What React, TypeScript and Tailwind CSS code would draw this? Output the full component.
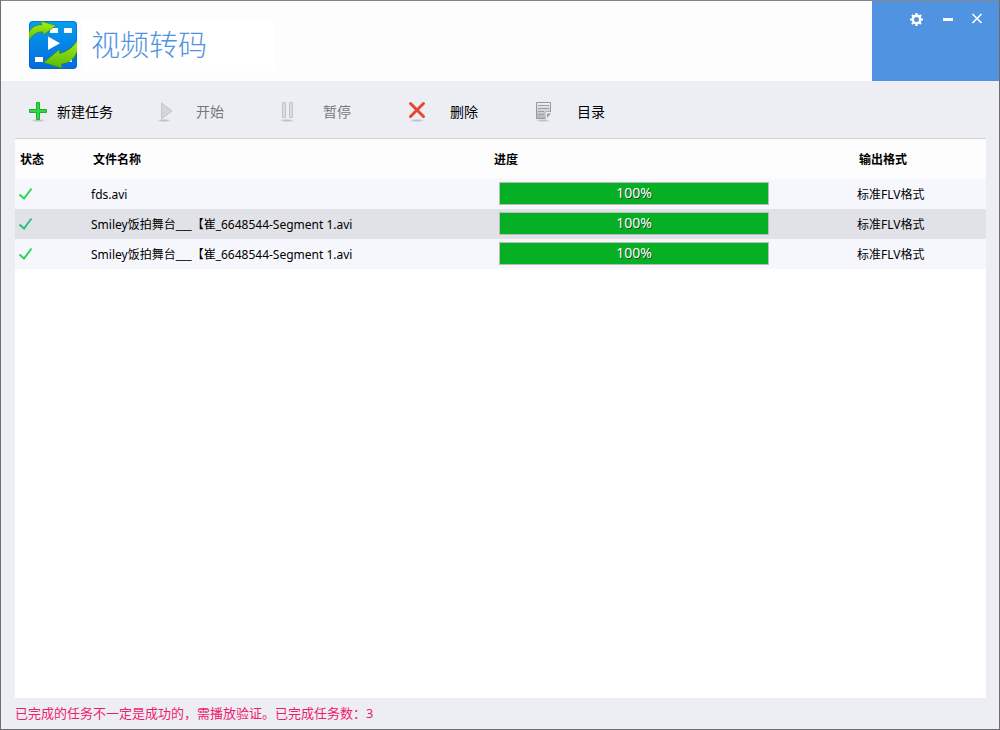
import React, { useState } from "react";

const initialTasks = [
  { id: 1, name: "fds.avi", progress: 100, format: "标准FLV格式" },
  { id: 2, name: "Smiley饭拍舞台___【崔_6648544-Segment 1.avi", progress: 100, format: "标准FLV格式" },
  { id: 3, name: "Smiley饭拍舞台___【崔_6648544-Segment 1.avi", progress: 100, format: "标准FLV格式" },
];

function Logo() {
  return (
    <svg width="48" height="48" viewBox="0 0 48 48" aria-hidden="true">
      <defs>
        <linearGradient id="logoBg" x1="0" y1="0" x2="0" y2="1">
          <stop offset="0" stopColor="#049ff0" />
          <stop offset="1" stopColor="#056adb" />
        </linearGradient>
        <linearGradient id="logoArrow" x1="0" y1="0" x2="0" y2="1">
          <stop offset="0" stopColor="#aaf014" />
          <stop offset="1" stopColor="#55b808" />
        </linearGradient>
        <clipPath id="logoClip">
          <rect width="48" height="48" rx="4" />
        </clipPath>
      </defs>
      <g clipPath="url(#logoClip)">
        <rect width="48" height="48" fill="url(#logoBg)" />
        <rect x="0.5" y="0.5" width="47" height="47" rx="4" fill="none" stroke="#0560bb" strokeOpacity="0.6" />
        <path d="M21 7h8v5h-8zM35 7h8v5h-8zM6 36h8v5H6zM35 36h8v5h-8z" fill="#fff" />
        <path d="M19 15.5v13.5l12-6.7z" fill="#fff" />
        <path
          d="M-1 21V14C1 7 6 3.500 13 4L12 0.300L27 4.500L14.500 14L13.800 10.800C8 10.500 3 14 -1 21Z"
          fill="url(#logoArrow)"
          stroke="#3a8a10"
          strokeWidth="0.6"
        />
        <path
          d="M49 18C45 25.500 39 30.500 30.500 32.500L30.500 28.500L14.500 41.500L33 47.200L32.500 43C41 42.500 47.500 36 49 27Z"
          fill="url(#logoArrow)"
          stroke="#3a8a10"
          strokeWidth="0.6"
        />
      </g>
    </svg>
  );
}

function Shadow({ cx }: { cx: number }) {
  return (
    <g fill="#b4b5bb">
      <ellipse cx={cx} cy="20.500" rx="7" ry="1.500" opacity="0.3" />
      <ellipse cx={cx} cy="20.500" rx="4.500" ry="0.800" opacity="0.7" />
    </g>
  );
}

function AddIcon() {
  return (
    <svg width="24" height="24" viewBox="0 0 24 24" aria-hidden="true">
      <Shadow cx={12} />
      <path d="M10.500 2.500h3v7h7v3h-7v7h-3v-7h-7v-3h7z" fill="#35d643" stroke="#1fae30" />
    </svg>
  );
}

function StartIcon() {
  return (
    <svg width="24" height="24" viewBox="0 0 24 24" aria-hidden="true">
      <Shadow cx={12} />
      <path d="M9.500 3v16L20 11z" fill="#d6d6d6" stroke="#c6c6c8" />
    </svg>
  );
}

function PauseIcon() {
  return (
    <svg width="24" height="24" viewBox="0 0 24 24" aria-hidden="true">
      <Shadow cx={8} />
      <path d="M3.500 2.500h3v15h-3zM10.500 2.500h3v15h-3z" fill="#dcdcdc" stroke="#c5c5c5" />
    </svg>
  );
}

function DeleteIcon() {
  return (
    <svg width="24" height="24" viewBox="0 0 24 24" aria-hidden="true">
      <Shadow cx={11} />
      <path d="M4.500 3.500l13 13M17.500 3.500l-13 13" stroke="#e4492f" strokeWidth="3" strokeLinecap="round" />
    </svg>
  );
}

function FolderIcon() {
  return (
    <svg width="24" height="24" viewBox="0 0 24 24" aria-hidden="true">
      <defs>
        <linearGradient id="paper" x1="0" y1="0" x2="0" y2="1">
          <stop offset="0" stopColor="#f1f1f3" />
          <stop offset="1" stopColor="#b2b2b8" />
        </linearGradient>
      </defs>
      <Shadow cx={10} />
      <path d="M3.500 2.500h14v9.500h-5v6.500h-9z" fill="url(#paper)" stroke="#97979e" />
      <path d="M5 5.500h11M5 8.500h11M5 11.500h6M5 14.500h6" stroke="#9d9da3" />
      <path d="M12.500 12h5.500l-5.500 6.500z" fill="#edeef4" />
      <path d="M14 18V13.500h4z" fill="#9a9aa1" />
    </svg>
  );
}

function WindowControls() {
  return (
    <div className="flex w-[127px] items-start justify-end gap-[14px] bg-[#4f93e1] pt-[10px] pr-[14px] text-white">
      <button type="button" aria-label="设置">
        <svg width="16" height="16" viewBox="0 0 16 16" className="block" aria-hidden="true">
          <circle cx="7.500" cy="8.500" r="3.700" fill="none" stroke="currentColor" strokeWidth="2.400" />
          <path
            d="M7.500 4.500V2M7.500 12.500V15M3.500 8.500H1M11.500 8.500H14M4.500 5.500L3 4M10.500 5.500L12 4M4.500 11.500L3 13M10.500 11.500L12 13"
            stroke="currentColor"
            strokeWidth="2.200"
          />
        </svg>
      </button>
      <button type="button" aria-label="最小化">
        <svg width="16" height="16" viewBox="0 0 16 16" className="block" aria-hidden="true">
          <path d="M4 7h10v3H4z" fill="currentColor" />
        </svg>
      </button>
      <button type="button" aria-label="关闭">
        <svg width="16" height="16" viewBox="0 0 16 16" className="block" aria-hidden="true">
          <path d="M3.500 3l9 9M12.500 3l-9 9" stroke="currentColor" strokeWidth="1.600" />
        </svg>
      </button>
    </div>
  );
}

const toolButton = "flex h-6 w-[127px] items-center gap-5 text-sm disabled:text-[#77777a]";

export default function App() {
  const [tasks] = useState(initialTasks);
  const [selectedId, setSelectedId] = useState(2);

  const finished = tasks.filter((task) => task.progress === 100).length;

  return (
    <div className="flex min-h-screen flex-col border border-[#6d6d72] border-t-[#858585] bg-[#edeef4] font-['Noto_Sans','Noto_Sans_CJK_SC',sans-serif] text-black">
      {/* Title bar */}
      <header className="flex h-20 justify-between bg-[#fdfdfd]">
        <div className="flex items-center gap-[5px] pt-2 pl-7">
          <Logo />
          <h1 className="flex h-[52px] w-[192px] items-center bg-white pl-[9px] text-[29px] font-light text-[#4f93e1]">
            视频转码
          </h1>
        </div>
        <WindowControls />
      </header>

      {/* Toolbar */}
      <nav className="flex h-[57px] items-start pt-[19px] pl-[25px]">
        <button type="button" className="flex h-6 w-[126px] items-center gap-[7px] text-sm">
          <AddIcon />
          新建任务
        </button>
        <button type="button" disabled className={toolButton}>
          <StartIcon />
          开始
        </button>
        <button type="button" disabled className={toolButton}>
          <PauseIcon />
          暂停
        </button>
        <button type="button" className={toolButton}>
          <DeleteIcon />
          删除
        </button>
        <button type="button" className={toolButton}>
          <FolderIcon />
          目录
        </button>
      </nav>

      {/* Task list */}
      <main className="mr-[13px] ml-[14px] flex-1 border-t border-[#d2d2d4] bg-white">
        <table className="w-full table-fixed border-collapse text-left text-xs">
          <thead>
            <tr className="h-10 bg-[#fcfcfc]">
              <th className="w-[73px] pt-[2px] pl-[5px] font-bold">状态</th>
              <th className="pt-[2px] pl-[5px] font-bold">文件名称</th>
              <th className="w-[365px] pt-[2px] pl-[5px] font-bold">进度</th>
              <th className="w-[132px] pt-[2px] pl-[5px] font-bold">输出格式</th>
            </tr>
          </thead>
          <tbody>
            {tasks.map((task) => (
              <tr
                key={task.id}
                onClick={() => setSelectedId(task.id)}
                className={`h-[30px] ${task.id === selectedId ? "bg-[#e1e2e7]" : "bg-[#f6f7fc]"}`}
              >
                <td className="pl-[3px]">
                  <svg width="16" height="16" viewBox="0 0 16 16" role="img" aria-label="已完成">
                    <path
                      d="M1.500 8.500L6 12.500L13.500 2.500"
                      fill="none"
                      stroke={task.id === selectedId ? "#2bbf7c" : "#2fd450"}
                      strokeWidth="2"
                    />
                  </svg>
                </td>
                <td className="truncate pt-[2px] pl-[3px]">{task.name}</td>
                <td className="pb-[2px] pl-[10px]">
                  <div
                    role="progressbar"
                    aria-label={task.name}
                    aria-valuenow={task.progress}
                    className="grid h-[23px] w-[270px] border border-[#bcbcbc] bg-white"
                  >
                    <div className="col-start-1 row-start-1 bg-[#06b025]" style={{ width: `${task.progress}%` }} />
                    <span className="col-start-1 row-start-1 text-center text-sm text-white [text-shadow:1px_1px_0_#1d4a22]">
                      {task.progress}%
                    </span>
                  </div>
                </td>
                <td className="pt-[2px] pl-[3px]">{task.format}</td>
              </tr>
            ))}
          </tbody>
        </table>
      </main>

      {/* Status bar */}
      <footer className="flex h-[31px] items-center pl-[14px] text-[13px] text-[#ee1c6f]">
        已完成的任务不一定是成功的，需播放验证。已完成任务数：{finished}
      </footer>
    </div>
  );
}
